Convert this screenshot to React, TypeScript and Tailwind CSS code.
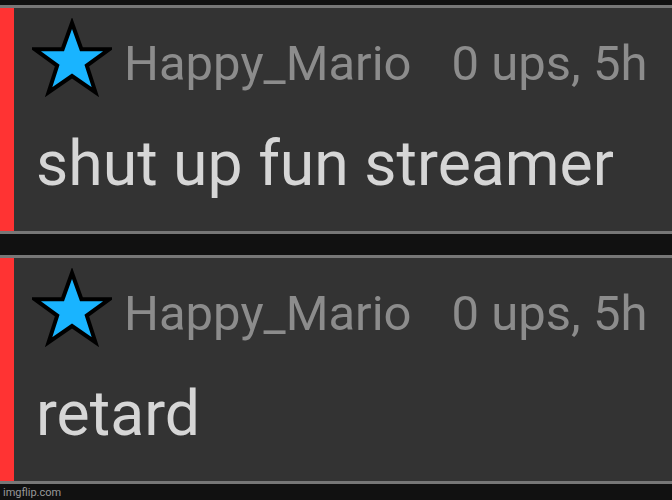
const comments = [
  { user: 'Happy_Mario', meta: '0 ups, 5h', text: 'shut up fun streamer' },
  { user: 'Happy_Mario', meta: '0 ups, 5h', text: 'retard' },
];

function Star() {
  return (
    <svg width="80" height="80" viewBox="0 0 80 80" className="shrink-0">
      <polygon
        points="40,5 49.4,31.2 77.4,31.2 54.8,47.6 63.4,74.2 40,58 16.6,74.2 25.2,47.6 2.6,31.2 30.6,31.2"
        fill="#19b4ff"
        stroke="#000"
        strokeWidth="4"
        strokeLinejoin="miter"
      />
    </svg>
  );
}

function Comment({ user, meta, text }: { user: string; meta: string; text: string }) {
  return (
    <div className="flex h-[229px] shrink-0 border-y-[3px] border-[#777] bg-[#333]">
      <div className="w-[14px] shrink-0 bg-[#ff3333]" />
      <div className="flex flex-col pl-[18px] pt-[10px]">
        <div className="flex items-start">
          <Star />
          <span className="ml-[12px] mt-[21px] text-[49px] leading-none text-[#8c8c8c]">{user}</span>
          <span className="ml-[40px] mt-[21px] text-[49px] leading-none text-[#8c8c8c]">{meta}</span>
        </div>
        <div className="mt-[35px] pl-[4px] text-[62.5px] leading-none text-[#d6d6d6]">{text}</div>
      </div>
    </div>
  );
}

export default function App() {
  return (
    <div className="flex h-[500px] w-[672px] flex-col overflow-hidden bg-[#111] pt-[5px] font-['Roboto',sans-serif]">
      <Comment {...comments[0]} />
      <div className="h-[21px] shrink-0" />
      <Comment {...comments[1]} />
      <div className="pl-[3px] pt-[3px] text-[11px] leading-none text-[#999]">imgflip.com</div>
    </div>
  );
}
